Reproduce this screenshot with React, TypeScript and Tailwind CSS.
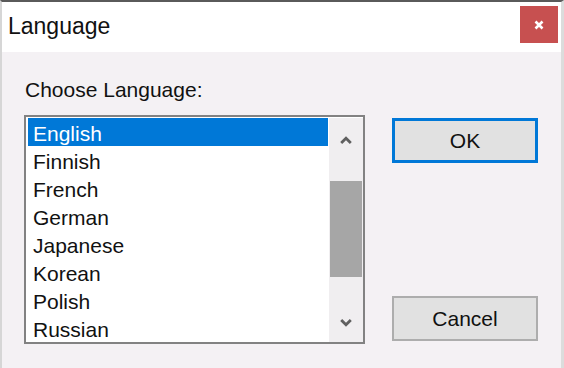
import { useState } from "react";

const LANGUAGES = ["English", "Finnish", "French", "German", "Japanese", "Korean", "Polish", "Russian"];

function Chevron({ up }: { up?: boolean }) {
  return (
    <svg width="12" height="8" viewBox="0 0 12 8">
      <polyline
        points={up ? "1.2,7 6,2.2 10.8,7" : "1.2,1 6,5.8 10.8,1"}
        fill="none"
        stroke="#606060"
        strokeWidth="2.8"
      />
    </svg>
  );
}

export default function App() {
  const [selected, setSelected] = useState("English");

  return (
    <div
      className="flex h-[368px] w-[564px] flex-col overflow-hidden border-t-2 border-l-2 border-r-[3px] border-t-[#5a5a5a] border-l-[#d6d6d6] border-r-[#dcdcdc] bg-[#f4f1f4] text-[#111]"
      style={{ fontFamily: '"Liberation Sans", Arial, sans-serif' }}
    >
      {/* Title bar */}
      <div className="flex h-[50px] shrink-0 items-start justify-between bg-white">
        <span className="pl-[6px] pt-[11px] text-[23px] leading-[26px]">Language</span>
        <button className="mr-[3px] mt-[4px] flex h-[37px] w-[38px] items-center justify-center bg-[#c75050]">
          <svg width="10" height="10" viewBox="0 0 10 10">
            <path d="M1.5 1.5 L8.5 8.5 M8.5 1.5 L1.5 8.5" stroke="#fff" strokeWidth="2.6" />
          </svg>
        </button>
      </div>

      {/* Body */}
      <div className="flex gap-[27px] pl-[22px] pt-[26px]">
        <div className="flex flex-col">
          <span className="pl-[1px] text-[21px] leading-[24px]">Choose Language:</span>
          <div className="mt-[13px] flex h-[229px] w-[341px] border-2 border-[#828282] bg-white pl-[2px] pt-[1px]">
            <ul className="w-[300px]">
              {LANGUAGES.map((lang) => (
                <li
                  key={lang}
                  onClick={() => setSelected(lang)}
                  className={`h-[28px] pl-[5px] pt-[4px] text-[21px] leading-[24px] ${
                    selected === lang ? "bg-[#0078d7] text-white" : "text-[#111]"
                  }`}
                >
                  {lang}
                </li>
              ))}
            </ul>
            <div className="ml-[1px] flex w-[34px] flex-col bg-[#f0eef0]">
              <div className="flex h-[42px] items-center justify-center pt-[1px]">
                <Chevron up />
              </div>
              <div className="flex-1 px-[1px]">
                <div className="mt-[21px] h-[96px] w-[32px] bg-[#a6a6a6]" />
              </div>
              <div className="flex h-[38px] items-center justify-center">
                <Chevron />
              </div>
            </div>
          </div>
        </div>

        <div className="flex flex-col pt-[40px]">
          <button className="flex h-[45px] w-[146px] items-center justify-center border-[3px] border-[#0078d7] bg-[#e1e1e1] text-[21px] leading-[24px]">
            OK
          </button>
          <button className="mt-[133px] flex h-[45px] w-[146px] items-center justify-center border-2 border-[#adadad] bg-[#e1e1e1] text-[21px] leading-[24px]">
            Cancel
          </button>
        </div>
      </div>
    </div>
  );
}
